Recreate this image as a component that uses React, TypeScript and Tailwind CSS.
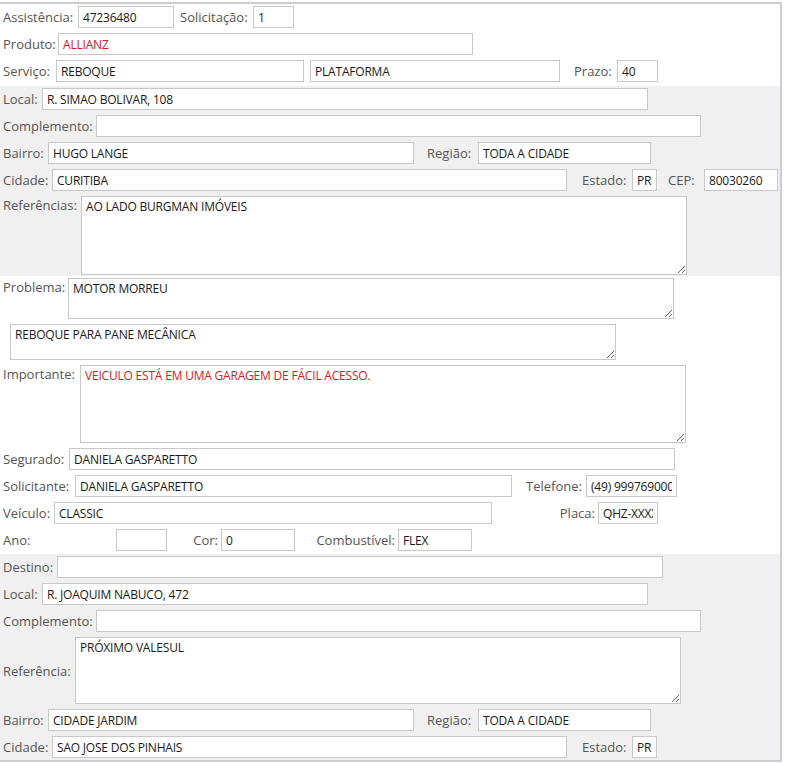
import React from "react";

type LP = { w: string; children?: React.ReactNode; cls?: string };
const Label = ({ w, children, cls = "" }: LP) => (
  <span className={`shrink-0 whitespace-nowrap text-[13px] leading-[18px] text-[#555555] ${w} ${cls}`}>{children}</span>
);

type IP = { w: string; v?: string; red?: boolean; cls?: string };
const Inp = ({ w, v = "", red, cls = "" }: IP) => (
  <input
    readOnly
    defaultValue={v}
    className={`h-[22px] shrink-0 border border-[#c8c8c8] bg-white px-[4px] text-[12px] tracking-[-0.2px] outline-none ${red ? "text-[#e3141c]" : "text-[#1a1a1a]"} ${w} ${cls}`}
  />
);

type TP = { w: string; h: string; v?: string; red?: boolean };
const Area = ({ w, h, v = "", red }: TP) => (
  <textarea
    readOnly
    defaultValue={v}
    className={`shrink-0 border border-[#c8c8c8] bg-white px-[4px] py-[2px] text-[12px] leading-[16px] tracking-[-0.2px] outline-none ${red ? "text-[#e3141c]" : "text-[#1a1a1a]"} ${w} ${h}`}
  />
);

const Row = ({ children, top }: { children: React.ReactNode; top?: boolean }) => (
  <div className={`flex pl-[3px] ${top ? "items-start" : "items-center h-[22px]"}`}>{children}</div>
);

export default function App() {
  return (
    <div className="font-['Open_Sans',sans-serif] bg-white">
      <div className="mt-[2px] w-[782px] border-t-2 border-r-2 border-b-2 border-[#c9ced4]">
        {/* Section A */}
        <div className="flex flex-col gap-[5px] bg-white pt-[2px] pb-[4px]">
          <Row>
            <Label w="w-[75px]">Assistência:</Label>
            <Inp w="w-[96px]" v="47236480" />
            <Label w="w-[73px]" cls="ml-[6px]">Solicitação:</Label>
            <Inp w="w-[41px]" v="1" />
          </Row>
          <Row>
            <Label w="w-[55px]">Produto:</Label>
            <Inp w="w-[415px]" v="ALLIANZ" red />
          </Row>
          <Row>
            <Label w="w-[53px]">Serviço:</Label>
            <Inp w="w-[248px]" v="REBOQUE" />
            <Inp w="w-[250px]" v="PLATAFORMA" cls="ml-[6px]" />
            <Label w="w-[43px]" cls="ml-[14px]">Prazo:</Label>
            <Inp w="w-[41px]" v="40" />
          </Row>
        </div>

        {/* Section B */}
        <div className="flex flex-col gap-[5px] bg-[#f0f0f0] pt-[2px] pb-[1px]">
          <Row>
            <Label w="w-[39px]">Local:</Label>
            <Inp w="w-[606px]" v="R. SIMAO BOLIVAR, 108" />
          </Row>
          <Row>
            <Label w="w-[93px]">Complemento:</Label>
            <Inp w="w-[605px]" />
          </Row>
          <Row>
            <Label w="w-[45px]">Bairro:</Label>
            <Inp w="w-[366px]" v="HUGO LANGE" />
            <Label w="w-[51px]" cls="ml-[13px]">Região:</Label>
            <Inp w="w-[173px]" v="TODA A CIDADE" />
          </Row>
          <Row>
            <Label w="w-[49px]">Cidade:</Label>
            <Inp w="w-[515px]" v="CURITIBA" />
            <Label w="w-[50px]" cls="ml-[15px]">Estado:</Label>
            <Inp w="w-[25px]" v="PR" cls="px-[3px]" />
            <Label w="w-[36px]" cls="ml-[11px]">CEP:</Label>
            <Inp w="w-[74px]" v="80030260" />
          </Row>
          <Row top>
            <Label w="w-[78px]">Referências:</Label>
            <Area w="w-[606px]" h="h-[79px]" v="AO LADO BURGMAN IMÓVEIS" />
          </Row>
        </div>

        {/* Section C */}
        <div className="flex flex-col gap-[5px] bg-white pt-[2px] pb-[3px]">
          <Row top>
            <Label w="w-[65px]">Problema:</Label>
            <Area w="w-[606px]" h="h-[41px]" v="MOTOR MORREU" />
          </Row>
          <div className="flex pl-[10px]">
            <Area w="w-[606px]" h="h-[36px]" v="REBOQUE PARA PANE MECÂNICA" />
          </div>
          <Row top>
            <Label w="w-[77px]">Importante:</Label>
            <Area w="w-[606px]" h="h-[78px]" v="VEICULO ESTÁ EM UMA GARAGEM DE FÁCIL ACESSO." red />
          </Row>
          <Row>
            <Label w="w-[66px]">Segurado:</Label>
            <Inp w="w-[606px]" v="DANIELA GASPARETTO" />
          </Row>
          <Row>
            <Label w="w-[72px]">Solicitante:</Label>
            <Inp w="w-[437px]" v="DANIELA GASPARETTO" />
            <Label w="w-[60px]" cls="ml-[14px]">Telefone:</Label>
            <Inp w="w-[91px]" v="(49) 999769000" />
          </Row>
          <Row>
            <Label w="w-[51px]">Veículo:</Label>
            <Inp w="w-[438px]" v="CLASSIC" />
            <Label w="w-[106px]" cls="text-right pr-[3px]">Placa:</Label>
            <Inp w="w-[60px]" v="QHZ-XXXX" />
          </Row>
          <Row>
            <Label w="w-[113px]">Ano:</Label>
            <Inp w="w-[51px]" />
            <Label w="w-[54px]" cls="text-right pr-[3px]">Cor:</Label>
            <Inp w="w-[74px]" v="0" />
            <Label w="w-[103px]" cls="text-right pr-[3px]">Combustível:</Label>
            <Inp w="w-[74px]" v="FLEX" />
          </Row>
        </div>

        {/* Section D */}
        <div className="flex flex-col gap-[5px] bg-[#f0f0f0] pt-[2px] pb-[2px]">
          <Row>
            <Label w="w-[54px]">Destino:</Label>
            <Inp w="w-[606px]" />
          </Row>
          <Row>
            <Label w="w-[39px]">Local:</Label>
            <Inp w="w-[606px]" v="R. JOAQUIM NABUCO, 472" />
          </Row>
          <Row>
            <Label w="w-[93px]">Complemento:</Label>
            <Inp w="w-[605px]" />
          </Row>
          <div className="flex items-center pl-[3px]">
            <Label w="w-[72px]">Referência:</Label>
            <Area w="w-[606px]" h="h-[67px]" v="PRÓXIMO VALESUL" />
          </div>
          <Row>
            <Label w="w-[45px]">Bairro:</Label>
            <Inp w="w-[366px]" v="CIDADE JARDIM" />
            <Label w="w-[51px]" cls="ml-[13px]">Região:</Label>
            <Inp w="w-[173px]" v="TODA A CIDADE" />
          </Row>
          <Row>
            <Label w="w-[49px]">Cidade:</Label>
            <Inp w="w-[515px]" v="SAO JOSE DOS PINHAIS" />
            <Label w="w-[50px]" cls="ml-[15px]">Estado:</Label>
            <Inp w="w-[25px]" v="PR" cls="px-[3px]" />
          </Row>
        </div>
      </div>
    </div>
  );
}
